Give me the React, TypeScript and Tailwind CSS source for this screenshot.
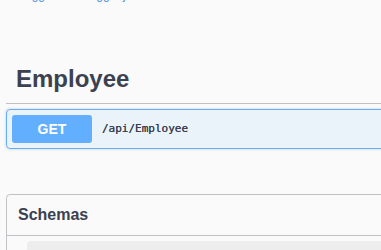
export default function App() {
  return (
    <div className="h-[250px] w-[381px] overflow-hidden bg-[#fafafa] font-['Liberation_Sans',Arial,sans-serif]">
      <div className="w-[440px] px-[6px]">
        {/* spec link, mostly scrolled off */}
        <div className="-mt-[12px] pl-[1px] text-[12px] leading-[14px] text-[#4990e2]">
          <a>/swagger/v1/swagger.json</a>
        </div>

        {/* Tag heading */}
        <h3 className="mt-[62px] border-b border-[rgba(59,65,81,0.3)] pb-[9px] pl-[10px] text-[24px] font-bold leading-[30px] text-[#3b4151]">
          Employee
        </h3>

        {/* GET operation */}
        <div className="mt-[5px] flex items-center rounded-[4px] border border-[#61affe] bg-[rgba(97,175,254,0.1)] p-[5px] shadow-[0_0_3px_rgba(0,0,0,0.19)]">
          <span className="flex h-[28px] w-[80px] items-center justify-center rounded-[3px] bg-[#61affe] text-[14px] font-bold text-white">
            GET
          </span>
          <span className="ml-[10px] font-['DejaVu_Sans_Mono',monospace] text-[11px] text-[#3b4151] [text-shadow:0_0_0.4px_#3b4151]">
            /api/Employee
          </span>
        </div>

        {/* Schemas */}
        <section className="mt-[45px] rounded-[4px] border border-[rgba(59,65,81,0.3)]">
          <h4 className="border-b border-[rgba(59,65,81,0.3)] py-[10px] pl-[11px] text-[16px] font-bold leading-[20px] text-[#3b4151]">
            Schemas
          </h4>
          <div className="px-[20px] pt-[5px]">
            <div className="h-[40px] rounded-[4px] bg-black/5" />
          </div>
        </section>
      </div>
    </div>
  );
}
